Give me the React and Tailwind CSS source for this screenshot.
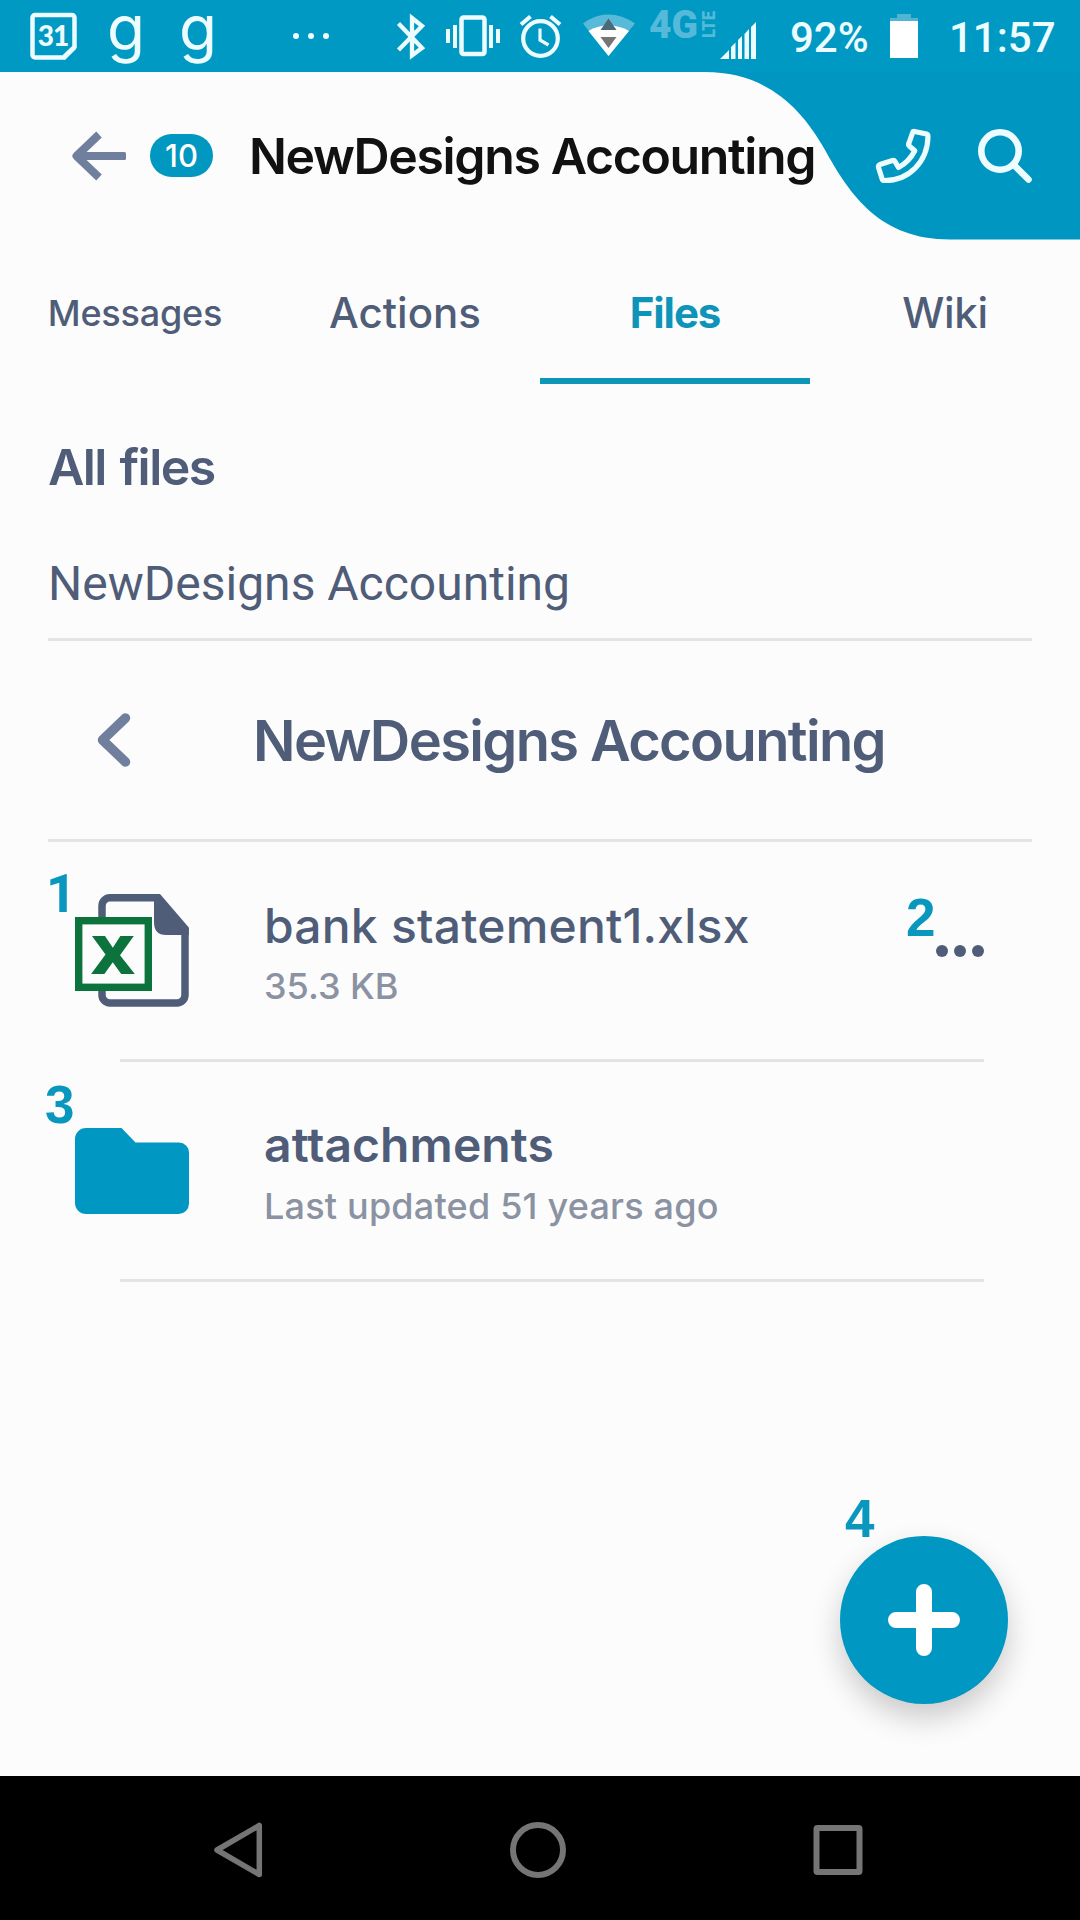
import React from 'react';

const inter = "font-['Inter',sans-serif]";
const roboto = "font-['Roboto',sans-serif]";

/* ---------- Status bar ---------- */

function CalendarIcon() {
  return (
    <svg className="h-[72px] w-[48px] shrink-0" viewBox="31 0 48 72" fill="none">
      <path d="M36 15h37a2.500 2.500 0 0 1 2.500 2.500V47L64.500 57.500H36a2.500 2.500 0 0 1-2.500-2.500V17.500A2.500 2.500 0 0 1 36 15z" stroke="#ecfcff" strokeWidth="4.500" />
      <path d="M63 58l12.500-12.500H77v3.500L66 60z" fill="#ecfcff" />
      <text x="54" y="45.500" textAnchor="middle" fontFamily="Lato, sans-serif" fontWeight="900" fontSize="28" letterSpacing="-1" fill="#ecfcff">31</text>
    </svg>
  );
}

function BluetoothIcon() {
  return (
    <svg className="ml-[66px] h-[72px] w-[30px] shrink-0" viewBox="396 0 30 72" fill="none">
      <path d="M398.500 23.500L422 48L412 55.500V18L422 26L398.500 50" stroke="#ecfcff" strokeWidth="4.300" />
    </svg>
  );
}

function VibrateIcon() {
  return (
    <svg className="ml-[18px] h-[72px] w-[58px] shrink-0" viewBox="444 0 58 72" fill="none">
      <rect x="461.500" y="17.500" width="23" height="36.500" rx="2" stroke="#ecfcff" strokeWidth="4.500" />
      <path d="M455 25v23M491 25v23M448 29v14M498 29v14" stroke="#ecfcff" strokeWidth="4" />
    </svg>
  );
}

function AlarmIcon() {
  return (
    <svg className="ml-[16px] h-[72px] w-[45px] shrink-0" viewBox="518 0 45 72" fill="none">
      <circle cx="540.500" cy="38.500" r="17.300" stroke="#ecfcff" strokeWidth="4.200" />
      <path d="M521 24.500l9.500-8M560 24.500l-9.500-8" stroke="#ecfcff" strokeWidth="4.200" />
      <path d="M540 28.500v11.500l8.500 5" stroke="#ecfcff" strokeWidth="3.200" />
    </svg>
  );
}

function WifiIcon() {
  return (
    <svg className="ml-[19px] h-[72px] w-[55px] shrink-0" viewBox="582 0 55 72">
      <path d="M608.500 56L583 23.500Q595 14.500 608.500 14.500T635 23.500z" fill="#59b9d8" />
      <path d="M608.500 56L588.500 31Q597 25.500 608.500 25.500T629 31z" fill="#fff" />
      <path d="M608.500 18.500l8 11.500h-16z" fill="#4b6a75" />
      <path d="M600.500 37h16l-8 11z" fill="#757575" />
    </svg>
  );
}

function NetworkLabel() {
  return (
    <svg className="ml-[11px] h-[72px] w-[70px] shrink-0" viewBox="648 0 70 72" fill="#55b9d9">
      <text x="649" y="37.500" fontFamily="Roboto, sans-serif" fontWeight="900" fontSize="38" textLength="49" lengthAdjust="spacingAndGlyphs">4G</text>
      <text transform="translate(715 38) rotate(-90)" fontFamily="Roboto, sans-serif" fontWeight="900" fontSize="18.500" textLength="27" lengthAdjust="spacingAndGlyphs">LTE</text>
    </svg>
  );
}

function SignalIcon() {
  return (
    <svg className="h-[72px] w-[40px] shrink-0" viewBox="718 0 40 72" fill="#ecfcff">
      <path d="M720 59L729 50V59zM731 59V47L735.500 42.500V59zM738 59V40L742 36V59zM744.500 59V34L749 29V59zM751 59V27L756 22V59z" />
    </svg>
  );
}

function NotificationG({ className }) {
  return (
    <span className={`${inter} flex h-[72px] w-[38px] shrink-0 items-center justify-center pb-[17px] text-[62px] leading-[55px] font-normal ${className}`}>g</span>
  );
}

function StatusBar() {
  return (
    <div className="flex h-[72px] items-center bg-[#0099c3] pl-[30px] text-[#ecfcff]">
      <CalendarIcon />
      <NotificationG className="ml-[29px]" />
      <NotificationG className="ml-[34px]" />
      <div className="ml-[76px] flex w-[37px] shrink-0 gap-[9px]">
        <i className="size-[6px] rounded-full bg-current" />
        <i className="size-[6px] rounded-full bg-current" />
        <i className="size-[6px] rounded-full bg-current" />
      </div>
      <BluetoothIcon />
      <VibrateIcon />
      <AlarmIcon />
      <WifiIcon />
      <NetworkLabel />
      <SignalIcon />
      <span className={`${roboto} ml-[32px] w-[80px] shrink-0 pt-[3px] text-[42px] leading-[69px] font-medium`}>92%</span>
      <svg className="ml-[20px] h-[72px] w-[28px] shrink-0" viewBox="890 0 28 72">
        <path d="M897 14h14v4h7v4h-28v-4h7z" fill="#4fb5d3" />
        <path d="M890 21h28v37h-28z" fill="#fff" />
      </svg>
      <span className={`${roboto} ml-[31px] shrink-0 pt-[3px] text-[42px] leading-[69px] font-medium`}>11:57</span>
    </div>
  );
}

/* ---------- Header ---------- */

function Header() {
  return (
    <header className="relative flex h-[168px] items-center pl-[68px]">
      <svg className="absolute top-0 right-0 h-[168px] w-[380px]" viewBox="700 72 380 168">
        <path d="M705 72C764 72 800 105 825 150C850 195 880 239.500 950 239.500H1080V72z" fill="#0096c2" />
      </svg>
      <svg className="relative h-[56px] w-[62px] shrink-0" viewBox="68 128 62 56" fill="none" stroke="#717f9e" strokeWidth="8" strokeLinejoin="round">
        <path d="M99 134.500L76.500 156L99 177.500" />
        <path d="M77 156H124" />
        <rect x="121" y="152" width="5" height="8" rx="1.500" fill="#717f9e" stroke="none" />
      </svg>
      <span className={`${inter} relative ml-[20px] mb-[1px] flex h-[43px] w-[63px] shrink-0 items-center justify-center rounded-full bg-[#0097c0] text-[31px] leading-[43px] font-medium text-white`}>10</span>
      <h1 className={`${inter} relative ml-[36px] shrink-0 text-[50px] leading-[60px] font-semibold tracking-[-1.38px] whitespace-nowrap text-[#111]`}>NewDesigns Accounting</h1>
      <div className="relative mr-[44px] ml-auto flex gap-[38px]">
        <svg className="h-[64px] w-[62px]" viewBox="872 124 62 64" fill="none" stroke="#ecfcff" strokeWidth="5.200" strokeLinejoin="round">
          <path d="M914.500 131.500L926.500 134Q928 134.500 928 136.500C927.500 162 909 180.500 884.500 180.500Q882.500 180.500 882 178.500L878.500 167.500Q878 165.500 880 164.500L892.500 160.500Q894 160 895 161.500L898.500 167.500Q909 162 914.800 150.800L909.500 146.200Q908 145 909 143L912.500 133Q913 131.300 914.500 131.500z" />
        </svg>
        <svg className="h-[64px] w-[64px]" viewBox="972 124 64 64" fill="none" stroke="#ecfcff" strokeLinecap="round">
          <circle cx="1000" cy="151" r="18.700" strokeWidth="6.600" />
          <path d="M1014 165L1028.500 179.500" strokeWidth="6.600" />
        </svg>
      </div>
    </header>
  );
}

function Tabs() {
  return (
    <nav className={`${inter} grid h-[144px] grid-cols-4 text-center text-[42px] leading-[130px] font-medium text-[#4f5d78]`}>
      <div className="pt-[8px] text-[36px] tracking-[-0.2px]">Messages</div>
      <div className="pt-[8px]">Actions</div>
      <div className="border-b-[6px] border-[#0d96b8] pt-[8px] font-bold tracking-[-1.1px] text-[#0d94b8]">Files</div>
      <div className="pt-[8px] tracking-[-0.3px]">Wiki</div>
    </nav>
  );
}

/* ---------- File list ---------- */

function Marker({ className, children }) {
  return (
    <span className={`absolute text-[53px] leading-[60px] font-bold text-[#0997bd] ${className}`}>{children}</span>
  );
}

function ExcelIcon() {
  return (
    <svg className="h-[118px] w-[118px] shrink-0" viewBox="73 892 118 118">
      <path d="M160 897.800H110a8 8 0 0 0-8 8V995a8 8 0 0 0 8 8H177a8 8 0 0 0 8-8V928" fill="none" stroke="#4f5d78" strokeWidth="7.500" />
      <path d="M154 894h6L188.800 927.500V935H166Q154 935 154 922z" fill="#4f5d78" />
      <rect x="78.700" y="920.700" width="69.600" height="66.600" fill="#fcfcfc" stroke="#0d733c" strokeWidth="7.400" />
      <text x="91" y="973.500" fontFamily="'Open Sans', sans-serif" fontWeight="800" fontSize="53.500" textLength="44" lengthAdjust="spacingAndGlyphs" fill="#0d733c">X</text>
    </svg>
  );
}

function FolderIcon() {
  return (
    <svg className="h-[118px] w-[118px] shrink-0" viewBox="73 1112 118 118" fill="#0097c2">
      <path d="M86 1128H121.500L135.500 1142.500H179a10 10 0 0 1 10 10V1203.500a10.500 10.500 0 0 1-10.500 10.500H86a11 11 0 0 1-11-11V1139a11 11 0 0 1 11-11z" />
    </svg>
  );
}

function FileRow({ icon, name, nameClass, meta, metaClass, menu, children }) {
  return (
    <li className="relative h-[220px] pl-[73px]">
      <div className="flex h-full">
        <div className="pt-[50px]">{icon}</div>
        <div className={`${inter} ml-[73px] whitespace-nowrap`}>
          <div className={`text-[48px] leading-[62px] text-[#4f5d78] ${nameClass}`}>{name}</div>
          <div className={`text-[36px] leading-[59px] font-medium text-[#8b92a2] ${metaClass}`}>{meta}</div>
        </div>
        {menu && (
          <div className="mt-[103px] mr-[96px] ml-auto flex h-[12px] gap-[6px]">
            <i className="size-[12px] rounded-full bg-[#4f5d78]" />
            <i className="size-[12px] rounded-full bg-[#4f5d78]" />
            <i className="size-[12px] rounded-full bg-[#4f5d78]" />
          </div>
        )}
      </div>
      <div className="absolute right-[96px] bottom-0 left-[120px] h-[3px] bg-[#e4e4e5]" />
      {children}
    </li>
  );
}

/* ---------- System navigation ---------- */

function NavigationBar() {
  return (
    <footer className="flex h-[144px] items-center bg-black pt-[4px] pl-[210px]">
      <svg className="h-[64px] w-[56px]" viewBox="210 1818 56 64" fill="none" stroke="#757575" strokeWidth="5.500" strokeLinejoin="round">
        <path d="M259.300 1825.500V1874.500L217 1850z" />
      </svg>
      <svg className="ml-[240px] h-[64px] w-[64px]" viewBox="506 1818 64 64" fill="none" stroke="#757575" strokeWidth="6">
        <circle cx="538" cy="1850" r="25" />
      </svg>
      <svg className="ml-[240px] h-[64px] w-[56px]" viewBox="810 1818 56 64" fill="none" stroke="#757575" strokeWidth="6">
        <rect x="816.500" y="1828" width="43" height="44" rx="1" />
      </svg>
    </footer>
  );
}

export default function App() {
  return (
    <div className="flex h-[1920px] w-[1080px] flex-col overflow-hidden bg-[#fcfcfc]">
      <StatusBar />
      <Header />
      <Tabs />
      <main className="relative flex-1">
        <h2 className={`${inter} ml-[48px] pt-[53px] text-[50px] leading-[60px] font-semibold tracking-[-1.55px] [word-spacing:2.5px] text-[#4f5d78]`}>All files</h2>
        <div className={`${roboto} mx-[48px] mt-[58px] h-[86px] border-b-[3px] border-[#e4e4e5] text-[48px] leading-[58px] text-[#4f5d78]`}>NewDesigns Accounting</div>
        <div className="mx-[48px] flex h-[201px] items-center border-b-[3px] border-[#e4e4e5]">
          <svg className="ml-[44px] h-[64px] w-[44px]" viewBox="92 708 44 64" fill="none" stroke="#717f9e" strokeWidth="9.500" strokeLinecap="round" strokeLinejoin="round">
            <path d="M125.500 718L102.500 740L125.500 762" />
          </svg>
          <h3 className={`${inter} ml-[117px] pt-[2px] text-[56px] leading-[68px] font-semibold tracking-[-1.64px] whitespace-nowrap text-[#4f5d78]`}>NewDesigns Accounting</h3>
        </div>
        <ul>
          <FileRow icon={<ExcelIcon />} name="bank statement1.xlsx" nameClass="pt-[53px] font-medium tracking-[0.2px]" meta="35.3 KB" metaClass="" menu>
            <Marker className="top-[22px] left-[46px] font-['Roboto',sans-serif]">1</Marker>
            <Marker className="top-[46px] left-[906px] font-['Liberation_Sans',sans-serif]">2</Marker>
          </FileRow>
          <FileRow icon={<FolderIcon />} name="attachments" nameClass="pt-[52px] font-semibold tracking-[0.08px]" meta="Last updated 51 years ago" metaClass="pt-px tracking-[0.2px]">
            <Marker className="top-[13px] left-[45px] font-['Liberation_Sans',sans-serif]">3</Marker>
          </FileRow>
        </ul>
        <Marker className="top-[1105px] left-[845px] font-['Liberation_Sans',sans-serif]">4</Marker>
        <button className="absolute right-[72px] bottom-[72px] flex size-[168px] items-center justify-center rounded-full bg-[#0097c2] shadow-[0_14px_30px_rgba(0,0,0,0.2)]">
          <svg className="size-[72px]" viewBox="0 0 72 72" stroke="#fff" strokeWidth="16" strokeLinecap="round">
            <path d="M36 8V64M8 36H64" />
          </svg>
        </button>
      </main>
      <NavigationBar />
    </div>
  );
}
